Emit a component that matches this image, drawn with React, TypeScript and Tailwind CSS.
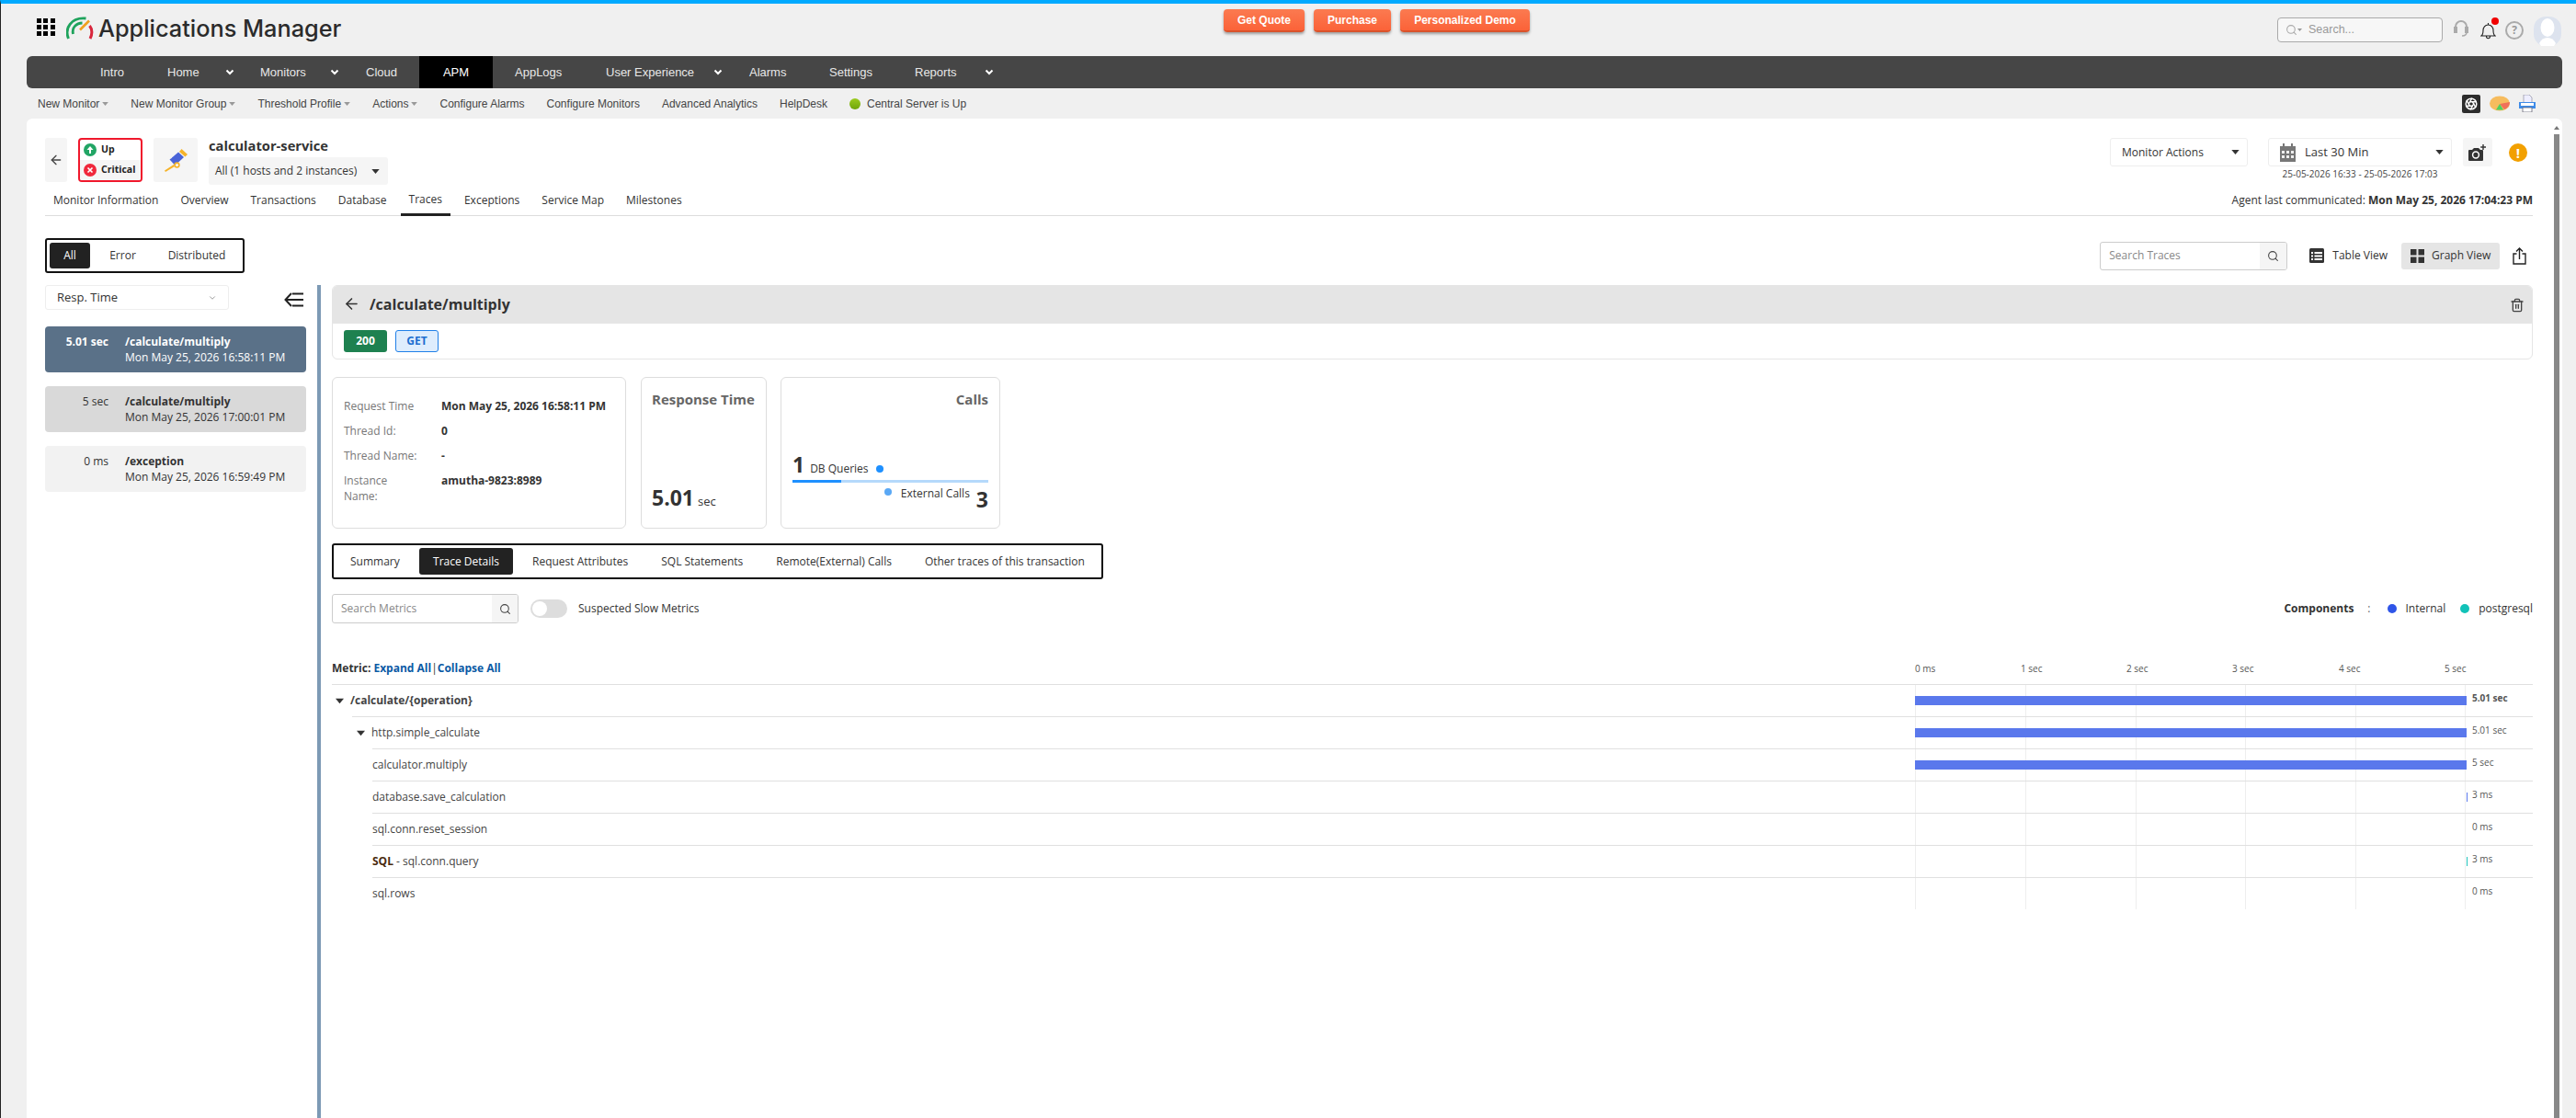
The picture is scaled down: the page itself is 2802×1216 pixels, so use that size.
import React from "react";
import { ArrowLeft, Search, Trash2, Aperture, ChevronDown } from "lucide-react";

const Chevron = () => (
  <svg width="10" height="7" viewBox="0 0 10 7" className="shrink-0">
    <path d="M1.5 1.5 5 5l3.5-3.5" fill="none" stroke="#fff" strokeWidth="2" />
  </svg>
);

const Caret = ({ color = "#333", w = 9, h = 5 }: { color?: string; w?: number; h?: number }) => (
  <svg width={w} height={h} viewBox="0 0 10 6" className="shrink-0">
    <path d="M0 0h10L5 6z" fill={color} />
  </svg>
);

const SubItem = ({ label, caret }: { label: string; caret?: boolean }) => (
  <div className="flex items-center">
    <span>{label}</span>
    {caret && (
      <span className="ml-[3px]">
        <Caret color="#999" w={7} h={4} />
      </span>
    )}
  </div>
);

const Logo = () => (
  <svg width="30" height="25" viewBox="0 0 30 25" className="mt-[14px] ml-[12px] shrink-0">
    <path d="M2.5 24C-2 13 5 .5 21.5 2" fill="none" stroke="#1ea35c" strokeWidth="2.8" />
    <path d="M7.5 19C6 12 11 7 17.5 7" fill="none" stroke="#1ea35c" strokeWidth="2.8" />
    <path d="M15 14.5 25 4.5" fill="none" stroke="#f0a01e" strokeWidth="2.6" />
    <path d="M25.5 10c3 4 3 9 .5 14" fill="none" stroke="#d8263c" strokeWidth="3" />
  </svg>
);

const Telescope = () => (
  <svg width="26" height="25" viewBox="0 0 26 25">
    <path d="M17 3 19.5 0 26 6l-2.6 2.6z" fill="#f5b32a" />
    <path d="M9 9.5 16 3.5l6 5.5-7 6.5z" fill="#4a64d8" />
    <path d="M6.5 11.5 10 9l5 5.5-3 3z" fill="#4a64d8" />
    <circle cx="14.5" cy="17.5" r="2.4" fill="none" stroke="#f5b32a" strokeWidth="1.6" />
    <path d="M11 17 1 23.5l1 1.5 10-6z" fill="#f5b32a" />
  </svg>
);

const Calendar = () => (
  <svg width="17" height="20" viewBox="0 0 17 20">
    <path d="M0 3h17v17H0z" fill="#777" />
    <path d="M3 0h2v4H3zM12 0h2v4h-2z" fill="#777" />
    <path d="M2 8h3v3H2zM7 8h3v3H7zM12 8h3v3h-3zM2 13h3v3H2zM7 13h3v3H7zM12 13h3v3h-3z" fill="#eee" />
  </svg>
);

const CameraPlus = () => (
  <svg width="20" height="20" viewBox="0 0 20 20">
    <path d="M1 7h3l2-2h5l2 2h2a1 1 0 0 1 1 1v10a1 1 0 0 1-1 1H1a1 1 0 0 1-1-1V8a1 1 0 0 1 1-1z" fill="#333" />
    <circle cx="8" cy="12.5" r="3.4" fill="none" stroke="#fff" strokeWidth="1.5" />
    <path d="M16 1v6M13.2 4h5.8" stroke="#333" strokeWidth="1.4" />
  </svg>
);

const TableIcon = () => (
  <svg width="16" height="16" viewBox="0 0 16 16">
    <rect width="16" height="16" rx="1.5" fill="#333" />
    <path d="M2 4h2v2H2zM5.5 4H14v2H5.5zM2 7.5h2v2H2zM5.5 7.5H14v2H5.5zM2 11h2v2H2zM5.5 11H14v2H5.5z" fill="#fff" />
  </svg>
);

const GridIcon = () => (
  <svg width="15" height="15" viewBox="0 0 15 15">
    <path d="M0 0h6.5v6.5H0zM8.5 0H15v6.5H8.5zM0 8.5h6.5V15H0zM8.5 8.5H15V15H8.5z" fill="#333" />
  </svg>
);

const ShareIcon = () => (
  <svg width="15" height="19" viewBox="0 0 15 19" fill="none" stroke="#222" strokeWidth="1.4">
    <path d="M4.5 7H1v11h13V7h-3.5" />
    <path d="M7.5 13V1M4 4.5 7.5 1 11 4.5" />
  </svg>
);

const CollapseIcon = () => (
  <svg width="21" height="16" viewBox="0 0 21 16" fill="none" stroke="#222" strokeWidth="2">
    <path d="M8 1 1.5 8 8 15M2 8h19M9 1.5h12M9 14.5h12" />
  </svg>
);

const Status = ({ bg, up }: { bg: string; up?: boolean }) => (
  <svg width="14" height="14" viewBox="0 0 14 14" className="shrink-0">
    <circle cx="7" cy="7" r="7" fill={bg} />
    {up ? (
      <path d="M7 3 3.5 7H6v4h2V7h2.5z" fill="#fff" />
    ) : (
      <path d="M4.5 4.5l5 5M9.5 4.5l-5 5" stroke="#fff" strokeWidth="1.7" />
    )}
  </svg>
);

const Triangle = () => <Caret color="#333" w={9} h={7} />;

const rows: {
  name: React.ReactNode;
  bar?: string;
  tiny?: string;
  value: string;
  bold?: boolean;
  wrap: string;
}[] = [
  { name: <div className="flex items-center pl-[4px] font-bold"><Triangle /><span className="ml-[7px]">/calculate/{"{operation}"}</span></div>, bar: "bg-[#5a78ec]", value: "5.01 sec", bold: true, wrap: "ml-0" },
  { name: <div className="flex items-center pl-[5px]"><Triangle /><span className="ml-[7px]">http.simple_calculate</span></div>, bar: "bg-[#5a78ec]", value: "5.01 sec", wrap: "ml-[22px]" },
  { name: "calculator.multiply", bar: "bg-[#5a78ec]", value: "5 sec", wrap: "ml-[44px]" },
  { name: "database.save_calculation", tiny: "bg-[#5a78ec]", value: "3 ms", wrap: "ml-[44px]" },
  { name: "sql.conn.reset_session", value: "0 ms", wrap: "ml-[44px]" },
  { name: <span><b className="text-[#4a2c10]">SQL</b> - sql.conn.query</span>, tiny: "bg-[#20c4bc]", value: "3 ms", wrap: "ml-[44px]" },
  { name: "sql.rows", value: "0 ms", wrap: "ml-[44px]" },
];

const traces = [
  { time: "5.01 sec", path: "/calculate/multiply", date: "Mon May 25, 2026 16:58:11 PM", box: "bg-[#5a7188] text-white", timeCls: "font-bold" },
  { time: "5 sec", path: "/calculate/multiply", date: "Mon May 25, 2026 17:00:01 PM", box: "bg-[#d9d9d9] text-[#333]", timeCls: "" },
  { time: "0 ms", path: "/exception", date: "Mon May 25, 2026 16:59:49 PM", box: "bg-[#f2f2f2] text-[#333]", timeCls: "" },
];

export default function App() {
  return (
    <div className="w-[2802px] h-[1216px] overflow-hidden bg-[#f0f0f0] border-l border-[#222] border-t-4 border-t-[#00aaff] flex flex-col font-['Open_Sans',sans-serif] text-[12px] text-[#333]">
      {/* top header */}
      <div className="h-[57px] flex items-start shrink-0">
        <div className="w-[1330px] flex items-start pl-[39px] shrink-0">
          <div className="mt-[16px] grid grid-cols-3 gap-[2px] w-[20px] shrink-0">
            {Array.from({ length: 9 }).map((_, i) => (
              <div key={i} className="h-[5px] w-[5px] bg-black" />
            ))}
          </div>
          <Logo />
          <div className="ml-[5px] mt-[9px] font-['Inter',sans-serif] text-[25.3px] leading-[36px] font-medium text-[#2b2b2b] whitespace-nowrap">Applications Manager</div>
        </div>
        <div className="w-[1146px] flex gap-[10px] pt-[6px] shrink-0 font-['Liberation_Sans',sans-serif] text-[12px] text-white font-bold">
          <div className="h-[25px] w-[88px] flex items-center justify-center rounded-[4px] bg-gradient-to-b from-[#fb7a50] to-[#fb6238] border-b-2 border-[#d9532b] shadow-[0_2px_3px_rgba(0,0,0,0.35)]">Get Quote</div>
          <div className="h-[25px] w-[84px] flex items-center justify-center rounded-[4px] bg-gradient-to-b from-[#fb7a50] to-[#fb6238] border-b-2 border-[#d9532b] shadow-[0_2px_3px_rgba(0,0,0,0.35)]">Purchase</div>
          <div className="h-[25px] w-[141px] flex items-center justify-center rounded-[4px] bg-gradient-to-b from-[#fb7a50] to-[#fb6238] border-b-2 border-[#d9532b] shadow-[0_2px_3px_rgba(0,0,0,0.35)]">Personalized Demo</div>
        </div>
        <div className="flex items-start shrink-0">
          <div className="mt-[15px] w-[180px] h-[27px] border border-[#aaa] rounded-[4px] bg-[#f7f7f7] flex items-center pl-[8px] font-['Liberation_Sans',sans-serif] text-[12.5px] text-[#999]">
            <Search size={13} color="#aaa" />
            <Caret color="#999" w={5} h={3} />
            <span className="ml-[7px]">Search...</span>
          </div>
          <svg width="16" height="20" viewBox="0 0 16 20" fill="none" stroke="#aaa" strokeWidth="2" className="ml-[12px] mt-[17px]">
            <path d="M2 12V8a6 6 0 0 1 12 0v4" />
            <path d="M1 9h2v5H1zM13 9h2v5h-2z" fill="#aaa" />
            <path d="M14 14c0 3-2 4-5 4" strokeWidth="1.5" />
          </svg>
          <div className="relative ml-[13px] mt-[20px] h-[20px] w-[17px]">
            <svg width="17" height="19" viewBox="0 0 17 19" fill="none" stroke="#222" strokeWidth="1.1">
              <path d="M1 15c2-1.5 2-3 2-6s2-6 5.5-6S14 6 14 9s0 4.5 2 6zM6.5 15.5c0 3 4 3 4 0M8.5 1v2" />
            </svg>
            <div className="absolute right-[-3px] top-[-5px] h-[8px] w-[8px] rounded-full bg-[#f00000]" />
          </div>
          <div className="ml-[10px] mt-[19px] h-[20px] w-[20px] rounded-full border-2 border-[#aaa] text-[#999] font-bold flex items-center justify-center text-[12px] leading-none">?</div>
          <svg width="30" height="32" viewBox="0 0 30 32" className="ml-[11px] mt-[14px]">
            <rect width="30" height="32" rx="13" fill="#dde3ee" />
            <ellipse cx="15" cy="12" rx="7.5" ry="10" fill="#fff" />
            <path d="M6 29c2-4 5-6 9-6s7 2 9 6l-2 3H8z" fill="#fff" />
          </svg>
        </div>
      </div>

      {/* dark nav */}
      <div className="ml-[28px] w-[2758px] h-[35px] shrink-0 rounded-[6px] bg-[#464646] flex pl-[80px] font-['Liberation_Sans',sans-serif] text-[13px] text-[#e8e8e8] overflow-hidden">
        <div className="w-[73px] flex items-center">Intro</div>
        <div className="w-[101px] flex items-center justify-between pr-[28px]">Home<Chevron /></div>
        <div className="w-[115px] flex items-center justify-between pr-[29px]">Monitors<Chevron /></div>
        <div className="w-[58px] flex items-center">Cloud</div>
        <div className="w-[80px] flex items-center justify-center bg-black text-white">APM</div>
        <div className="w-[122px] flex items-center pl-[24px]">AppLogs</div>
        <div className="w-[157px] flex items-center justify-between pr-[29px] pl-[1px]">User Experience<Chevron /></div>
        <div className="w-[87px] flex items-center">Alarms</div>
        <div className="w-[93px] flex items-center">Settings</div>
        <div className="w-[86px] flex items-center justify-between">Reports<Chevron /></div>
      </div>

      {/* sub nav */}
      <div className="ml-[28px] w-[2758px] h-[33px] shrink-0 flex items-center pl-[12px] pr-[29px] gap-[24px] font-['Liberation_Sans',sans-serif] text-[12px] text-[#444]">
        <SubItem label="New Monitor" caret />
        <SubItem label="New Monitor Group" caret />
        <SubItem label="Threshold Profile" caret />
        <SubItem label="Actions" caret />
        <SubItem label="Configure Alarms" />
        <SubItem label="Configure Monitors" />
        <SubItem label="Advanced Analytics" />
        <SubItem label="HelpDesk" />
        <div className="flex items-center gap-[7px]">
          <div className="h-[12px] w-[12px] rounded-full bg-gradient-to-b from-[#9bcb1e] to-[#6fa50a]" />
          <span>Central Server is Up</span>
        </div>
        <div className="ml-auto flex items-center gap-[10px]">
          <div className="h-[20px] w-[20px] rounded-[2px] bg-[#2c2c2c] flex items-center justify-center">
            <Aperture size={14} color="#fff" strokeWidth={2.5} />
          </div>
          <svg width="22" height="17" viewBox="0 0 22 17">
            <ellipse cx="11" cy="8.5" rx="11" ry="8" fill="#f6bc5e" />
            <path d="M11 9 22 7c0 4-3 7-6 8z" fill="#f0705a" />
            <path d="M11 9 7 15.5h8z" fill="#4fd060" />
          </svg>
          <svg width="18" height="19" viewBox="0 0 18 19">
            <path d="M5 0h6l3 3v6H5z" fill="#eef" stroke="#99a" strokeWidth="0.8" />
            <path d="M0 8h18v7H0z" fill="#3e8be8" />
            <path d="M2 9h14v3H2z" fill="#fff" />
            <path d="M4 14h10v5H4z" fill="#fff" stroke="#667" strokeWidth="0.8" />
          </svg>
        </div>
      </div>

      {/* main panel */}
      <div className="relative ml-[28px] w-[2758px] flex-1 min-h-0 bg-white rounded-t-[6px] pl-[20px] pr-[32px] pt-[21px] flex flex-col">
        {/* scrollbar */}
        <div className="absolute right-[3px] top-[17px] bottom-0 w-[6px] bg-[#888]" />
        <div className="absolute right-[3px] top-[8px] h-0 w-0 border-x-[3px] border-b-[4px] border-x-transparent border-b-[#777]" />

        {/* monitor head */}
        <div className="flex items-start h-[51px] shrink-0">
          <div className="w-[24px] h-[48px] rounded-[3px] bg-[#f5f5f5] flex items-center justify-center">
            <ArrowLeft size={16} color="#444" />
          </div>
          <div className="ml-[12px] w-[70px] h-[48px] rounded-[4px] border-2 border-[#f0182c] flex flex-col font-bold text-[10.5px] text-[#222] overflow-hidden">
            <div className="h-[22px] flex items-center pl-[4px] gap-[5px]"><Status bg="#22a565" up />Up</div>
            <div className="h-[22px] flex items-center pl-[4px] gap-[5px] bg-[#f5f5f5]"><Status bg="#f0283c" />Critical</div>
          </div>
          <div className="ml-[12px] w-[48px] h-[48px] rounded-[3px] bg-[#f5f5f5] flex items-center justify-center">
            <Telescope />
          </div>
          <div className="ml-[12px] flex flex-col">
            <div className="h-[21px] -mt-[2px] text-[14.7px] leading-[20px] font-bold text-[#333]">calculator-service</div>
            <div className="h-[30px] mt-[2px] w-[195px] rounded-[3px] bg-[#f5f5f5] flex items-center justify-between pl-[7px] pr-[9px] text-[12px]">
              <span>All (1 hosts and 2 instances)</span>
              <Caret color="#333" />
            </div>
          </div>
          <div className="ml-auto w-[150px] h-[31px] border border-[#eee] rounded-[3px] flex items-center justify-between pl-[12px] pr-[8px] text-[12px]">
            <span>Monitor Actions</span>
            <Caret color="#333" />
          </div>
          <div className="ml-[22px] w-[200px] flex flex-col items-center">
            <div className="w-[200px] h-[31px] border border-[#eee] rounded-[3px] flex items-center pl-[12px] pr-[8px] text-[13px]">
              <Calendar />
              <span className="ml-[10px]">Last 30 Min</span>
              <span className="ml-auto"><Caret color="#333" /></span>
            </div>
            <div className="text-[10px] leading-[14px] mt-[1px] text-[#444] whitespace-nowrap">25-05-2026 16:33 - 25-05-2026 17:03</div>
          </div>
          <div className="ml-[12px] w-[32px] h-[31px] rounded-[3px] bg-[#f5f5f5] flex items-center justify-center">
            <CameraPlus />
          </div>
          <div className="ml-[18px] mr-[6px] mt-[6px] h-[20px] w-[20px] rounded-full bg-[#f2a000] text-white font-bold text-[15px] leading-none flex items-center justify-center">!</div>
        </div>

        {/* tabs */}
        <div className="h-[34px] shrink-0 border-b border-[#ddd] flex items-stretch">
          <div className="flex gap-[6px]">
            {["Monitor Information", "Overview", "Transactions", "Database", "Traces", "Exceptions", "Service Map", "Milestones"].map((t) => (
              <div key={t} className={t === "Traces" ? "px-[9px] flex items-center border-b-[3px] border-[#222] -mb-px" : "px-[9px] flex items-center"}>
                {t}
              </div>
            ))}
          </div>
          <div className="ml-auto flex items-center text-[12px]">
            Agent last communicated:&nbsp;<b>Mon May 25, 2026 17:04:23 PM</b>
          </div>
        </div>

        {/* filter row */}
        <div className="mt-[24px] h-[38px] shrink-0 flex items-center">
          <div className="h-[38px] w-[217px] border-2 border-[#111] rounded-[3px] p-[3px] flex items-stretch">
            <div className="w-[44px] shrink-0 bg-[#222] text-white rounded-[3px] flex items-center justify-center">All</div>
            <div className="ml-[2px] w-[67px] shrink-0 flex items-center justify-center">Error</div>
            <div className="w-[94px] shrink-0 flex items-center justify-center">Distributed</div>
          </div>
          <div className="ml-auto w-[204px] h-[31px] border border-[#ccc] rounded-[3px] flex items-stretch overflow-hidden text-[#888]">
            <div className="flex-1 flex items-center pl-[9px]">Search Traces</div>
            <div className="w-[29px] bg-[#f5f5f5] flex items-center justify-center"><Search size={13} color="#444" /></div>
          </div>
          <div className="ml-[24px] flex items-center">
            <TableIcon />
            <span className="ml-[9px]">Table View</span>
          </div>
          <div className="ml-[15px] w-[107px] h-[29px] rounded-[3px] bg-[#e5e5e5] flex items-center pl-[10px]">
            <GridIcon />
            <span className="ml-[8px]">Graph View</span>
          </div>
          <div className="ml-[14px] mr-[7px] flex items-center"><ShareIcon /></div>
        </div>

        {/* body */}
        <div className="mt-[13px] flex-1 min-h-0 flex">
          {/* list */}
          <div className="w-[284px] shrink-0">
            <div className="flex items-start justify-between h-[27px]">
              <div className="w-[200px] h-[27px] border border-[#eee] rounded-[3px] flex items-center justify-between pl-[12px] pr-[12px] text-[13px]">
                <span>Resp. Time</span>
                <ChevronDown size={10} color="#888" />
              </div>
              <div className="mt-[8px] mr-[3px]"><CollapseIcon /></div>
            </div>
            <div className="mt-[18px] flex flex-col gap-[15px]">
              {traces.map((t) => (
                <div key={t.date} className={`h-[50px] rounded-[4px] flex items-center ${t.box}`}>
                  <div className={`w-[69px] self-start pt-[8px] leading-[17px] text-right ${t.timeCls}`}>{t.time}</div>
                  <div className="ml-[18px] leading-[17px]">
                    <div className="font-bold">{t.path}</div>
                    <div>{t.date}</div>
                  </div>
                </div>
              ))}
            </div>
          </div>

          <div className="ml-[12px] w-[4px] bg-[#7d9ab5] shrink-0" />

          {/* detail */}
          <div className="ml-[12px] flex-1 min-w-0 flex flex-col">
            <div className="h-[81px] shrink-0 border border-[#e5e5e5] rounded-[6px] overflow-hidden">
              <div className="h-[41px] bg-[#e5e5e5] flex items-center pl-[11px] pr-[8px]">
                <span className="-mt-[3px]"><ArrowLeft size={19} color="#333" /></span>
                <span className="ml-[10px] -mt-[2px] text-[16px] font-bold">/calculate/multiply</span>
                <span className="ml-auto"><Trash2 size={16} color="#444" /></span>
              </div>
              <div className="flex pl-[12px] pt-[7px] gap-[9px] font-bold">
                <div className="h-[24px] w-[47px] rounded-[3px] bg-[#1e8150] text-white flex items-center justify-center">200</div>
                <div className="h-[24px] w-[47px] rounded-[3px] bg-[#deedfd] border border-[#2080e8] text-[#1c6fd0] flex items-center justify-center">GET</div>
              </div>
            </div>

            <div className="mt-[19px] h-[165px] shrink-0 flex">
              <div className="w-[320px] border border-[#ddd] rounded-[6px] pt-[17px] pl-[12px] leading-[17px]">
                <div className="flex py-[5px]"><div className="w-[106px] text-[#777]">Request Time</div><b>Mon May 25, 2026 16:58:11 PM</b></div>
                <div className="flex py-[5px]"><div className="w-[106px] text-[#777]">Thread Id:</div><b>0</b></div>
                <div className="flex py-[5px]"><div className="w-[106px] text-[#777]">Thread Name:</div><b>-</b></div>
                <div className="flex py-[5px]"><div className="w-[106px] text-[#777]">Instance<br />Name:</div><b>amutha-9823:8989</b></div>
              </div>
              <div className="ml-[16px] w-[137px] border border-[#ddd] rounded-[6px] pl-[11px] pt-[13px] flex flex-col">
                <div className="text-[15px] leading-[20px] font-bold text-[#666] whitespace-nowrap">Response Time</div>
                <div className="mt-auto mb-[12px] leading-[32px]">
                  <span className="text-[23px] font-bold">5.01</span>
                  <span className="ml-[4px] text-[13px]">sec</span>
                </div>
              </div>
              <div className="ml-[15px] w-[239px] border border-[#ddd] rounded-[6px] px-[12px] pt-[13px] flex flex-col">
                <div className="text-[15px] leading-[20px] font-bold text-[#666] text-right">Calls</div>
                <div className="mt-[45px] h-[32px] flex items-end">
                  <span className="text-[23px] leading-[32px] font-bold">1</span>
                  <span className="ml-[6px] mb-[1px] text-[12px] leading-[20px]">DB Queries</span>
                  <span className="ml-[8px] mb-[7px] h-[8px] w-[8px] rounded-full bg-[#1e90ff]" />
                </div>
                <div className="mt-[1px] h-[3px] bg-[#b5d9fb]">
                  <div className="h-[3px] w-[25%] bg-[#1e90ff]" />
                </div>
                <div className="mt-[1px] flex justify-end items-start">
                  <span className="mt-[5px] h-[8px] w-[8px] rounded-full bg-[#5aa8f5]" />
                  <span className="ml-[10px] leading-[20px] mt-[1px]">External Calls</span>
                  <span className="ml-[7px] text-[23px] leading-[32px] font-bold mt-[1px]">3</span>
                </div>
              </div>
            </div>

            <div className="mt-[16px] h-[39px] w-[839px] shrink-0 border-2 border-[#111] rounded-[3px] p-[3px] flex items-stretch whitespace-nowrap">
              <div className="w-[90px] shrink-0 pl-[15px] flex items-center">Summary</div>
              <div className="w-[102px] shrink-0 bg-[#222] text-white rounded-[3px] flex items-center justify-center">Trace Details</div>
              <div className="ml-[3px] shrink-0 px-[18px] flex items-center">Request Attributes</div>
              <div className="shrink-0 px-[18px] flex items-center">SQL Statements</div>
              <div className="shrink-0 px-[18px] flex items-center">Remote(External) Calls</div>
              <div className="shrink-0 px-[18px] flex items-center">Other traces of this transaction</div>
            </div>

            <div className="mt-[16px] h-[32px] shrink-0 flex items-center">
              <div className="w-[203px] h-[32px] border border-[#ccc] rounded-[3px] flex items-stretch overflow-hidden text-[#888]">
                <div className="flex-1 flex items-center pl-[9px]">Search Metrics</div>
                <div className="w-[28px] bg-[#f5f5f5] flex items-center justify-center"><Search size={13} color="#444" /></div>
              </div>
              <div className="ml-[13px] w-[40px] h-[20px] rounded-full bg-[#ddd] flex items-center pl-[2px]">
                <div className="h-[16px] w-[16px] rounded-full bg-white" />
              </div>
              <span className="ml-[12px]">Suspected Slow Metrics</span>
              <div className="ml-auto flex items-center">
                <b>Components</b>
                <span className="ml-[15px] text-[#666]">:</span>
                <span className="ml-[18px] h-[10px] w-[10px] rounded-full bg-[#2f55e8]" />
                <span className="ml-[10px]">Internal</span>
                <span className="ml-[16px] h-[10px] w-[10px] rounded-full bg-[#12c2b8]" />
                <span className="ml-[10px]">postgresql</span>
              </div>
            </div>

            <div className="h-[66px] shrink-0 flex items-end pb-[8px]">
              <div className="flex-1 leading-[18px] font-bold">
                Metric: <span className="text-[#0b5aa5]">Expand All</span><span className="font-normal text-[#333]">|</span><span className="text-[#0b5aa5]">Collapse All</span>
              </div>
              <div className="w-[672px] flex text-[10px] leading-[18px] text-[#555]">
                <div className="w-[115px]">0 ms</div>
                <div className="w-[115px]">1 sec</div>
                <div className="w-[115px]">2 sec</div>
                <div className="w-[116px]">3 sec</div>
                <div className="w-[115px]">4 sec</div>
                <div>5 sec</div>
              </div>
            </div>

            <div className="shrink-0">
              {rows.map((r, i) => (
                <div key={i} className={`h-[35px] border-t border-[#e0e0e0] flex ${r.wrap}`}>
                  <div className="flex-1 min-w-0 pt-[8px] leading-[18px] text-[#444]">{r.name}</div>
                  <div className="w-[672px] shrink-0 flex">
                    <div className="relative w-[600px] flex shrink-0">
                      <div className="w-[120px] border-l border-[#eee]" />
                      <div className="w-[120px] border-l border-[#eee]" />
                      <div className="w-[119px] border-l border-[#eee]" />
                      <div className="w-[120px] border-l border-[#eee]" />
                      <div className="w-[120px] border-l border-r border-[#eee]" />
                      {r.bar && <div className={`absolute left-0 right-0 top-[12px] h-[10px] ${r.bar}`} />}
                      {r.tiny && <div className={`absolute right-[-1px] top-[12px] h-[10px] w-px ${r.tiny}`} />}
                    </div>
                    <div className={`ml-[6px] pt-[6px] text-[10px] leading-[16px] text-[#555] ${r.bold ? "font-bold" : ""}`}>{r.value}</div>
                  </div>
                </div>
              ))}
            </div>
          </div>
        </div>
      </div>
    </div>
  );
}
